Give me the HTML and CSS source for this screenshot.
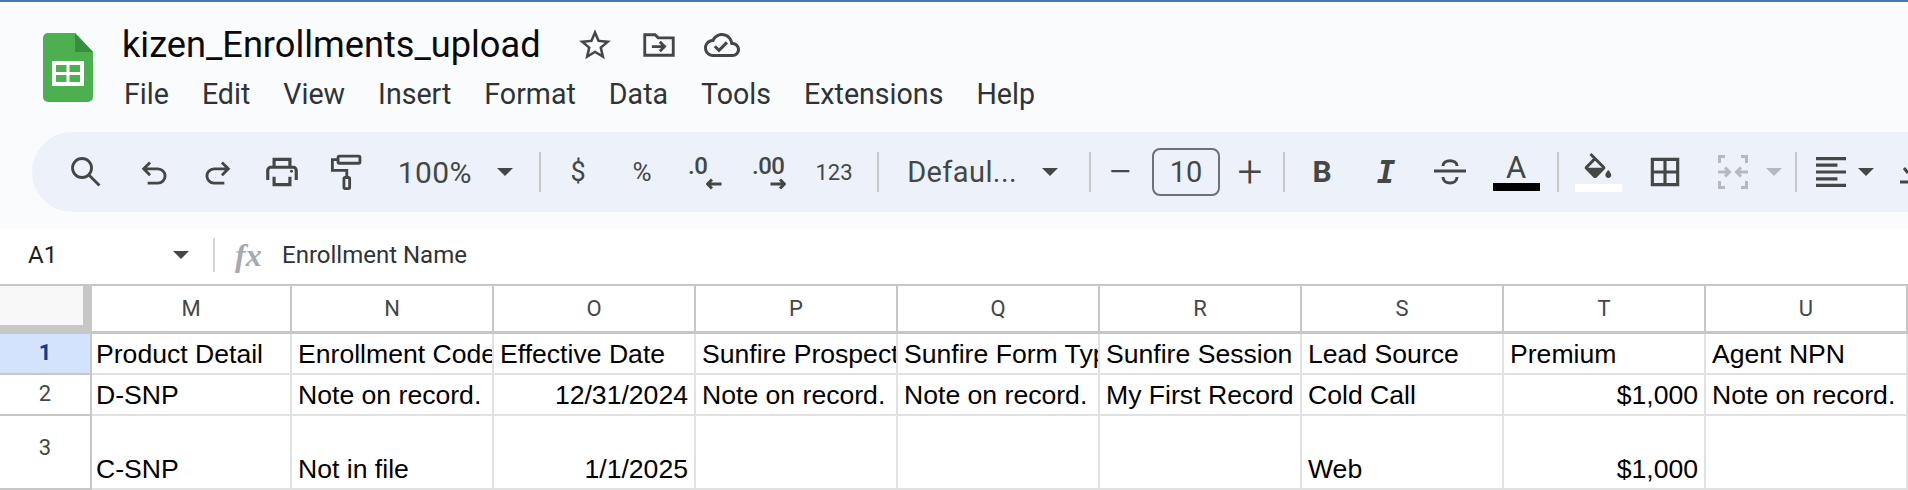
FILE: index.html
```html
<!DOCTYPE html>
<html lang="en">
<head>
<meta charset="utf-8">
<title>kizen_Enrollments_upload</title>
<link rel="stylesheet" href="styles.css">
</head>
<body>
<div class="app">
  <div class="accent"></div>
  <header class="header">
    <svg class="logo" viewBox="0 0 50 69">
      <path fill="#4caf50" d="M5 0H32L50 19V64a5 5 0 0 1-5 5H5a5 5 0 0 1-5-5V5a5 5 0 0 1 5-5z"/>
      <path fill="#388e3c" d="M32 0L50 19H32z"/>
      <path fill="#fff" d="M9 28H41V53H9z"/>
      <path fill="#4caf50" d="M13 32H23.500V39H13zM26.500 32H37V39H26.500zM13 42H23.500V49H13zM26.500 42H37V49H26.500z"/>
    </svg>
    <div class="titles">
      <div class="title-row">
        <h1 class="title">kizen_Enrollments_upload</h1>
        <svg class="head-icon" viewBox="0 0 24 24"><path d="M22 9.240l-7.190-.62L12 2 9.190 8.630 2 9.240l5.460 4.730L5.820 21 12 17.270 18.180 21l-1.630-7.030L22 9.240zM12 15.400l-3.760 2.270 1-4.280-3.320-2.880 4.380-.38L12 6.100l1.710 4.040 4.380.38-3.320 2.880 1 4.280L12 15.400z"/></svg>
        <svg class="head-icon" viewBox="0 0 24 24"><path class="line" d="M3 18.500V5.500H9.500L11.500 7.500H21V18.500z"/><path class="line" d="M7.500 13H15M12.500 10L15.500 13L12.500 16"/></svg>
        <svg class="head-icon cloud" viewBox="0 0 24 24"><path d="M19.350 10.040C18.670 6.590 15.640 4 12 4 9.110 4 6.600 5.640 5.350 8.040 2.340 8.360 0 10.910 0 14c0 3.310 2.690 6 6 6h13c2.760 0 5-2.240 5-5 0-2.640-2.050-4.780-4.650-4.960zM19 18H6c-2.210 0-4-1.790-4-4 0-2.050 1.530-3.760 3.560-3.970l1.070-.11.5-.95C8.080 7.140 9.940 6 12 6c2.620 0 4.880 1.860 5.390 4.430l.3 1.500 1.530.11c1.560.1 2.780 1.410 2.780 2.960 0 1.650-1.350 3-3 3zm-9-3.820l-2.090-2.090L6.500 13.500 10 17l6.010-6.010-1.410-1.410z"/></svg>
      </div>
      <nav class="menu">
        <span>File</span><span>Edit</span><span>View</span><span>Insert</span><span>Format</span><span>Data</span><span>Tools</span><span>Extensions</span><span>Help</span>
      </nav>
    </div>
  </header>

  <div class="toolbar-wrap">
  <div class="toolbar">
    <div class="tool tool-search"><svg class="ico" viewBox="0 0 24 24"><circle class="line" cx="9.500" cy="9.500" r="6"/><path class="line" d="M14 14L20.500 20.500"/></svg></div>
    <div class="tool"><svg class="ico" viewBox="0 0 24 24"><path class="line" d="M9.500 6L5.500 10L9.500 14M5.500 10H14.500A4.500 4.500 0 0 1 14.500 19H8"/></svg></div>
    <div class="tool"><svg class="ico" viewBox="0 0 24 24"><path class="line" d="M14.500 6L18.500 10L14.500 14M18.500 10H9.500A4.500 4.500 0 0 0 9.500 19H16"/></svg></div>
    <div class="tool"><svg class="ico" viewBox="0 0 24 24"><path d="M19 8h-1V3H6v5H5c-1.660 0-3 1.340-3 3v6h4v4h12v-4h4v-6c0-1.660-1.340-3-3-3zM8 5h8v3H8V5zm8 14H8v-4h8v4zm2-2v-2H6v2H4v-6c0-.55.45-1 1-1h14c.55 0 1 .45 1 1v6h-2z"/><circle cx="18" cy="11.500" r=".9"/></svg></div>
    <div class="tool"><svg class="ico" viewBox="0 0 24 24"><rect class="line" x="7" y="2" width="13.800" height="4.500" rx=".8"/><path class="line" d="M7 4.200H3.400V11H12.500V15.500"/><rect class="line" x="10.700" y="15.500" width="3.600" height="7" rx=".8"/></svg></div>
    <div class="tool tool-zoom"><span class="tool-text tool-text-zoom">100%</span><span class="caret"></span></div>
    <span class="sep sep-zoom"></span>
    <div class="tool"><span class="sym">$</span></div>
    <div class="tool"><span class="sym sym-pct">%</span></div>
    <div class="tool"><div class="dec"><span class="dec-text">.0</span><svg class="dec-arrow" viewBox="0 0 16 12"><path class="line-bold" d="M15.500 6H1.500M6 1.500L1.500 6L6 10.500"/></svg></div></div>
    <div class="tool"><div class="dec"><span class="dec-text">.00</span><svg class="dec-arrow" viewBox="0 0 16 12"><path class="line-bold" d="M.5 6H14.500M10 1.500L14.500 6L10 10.500"/></svg></div></div>
    <div class="tool"><span class="num">123</span></div>
    <span class="sep sep-num"></span>
    <div class="tool tool-font"><span class="tool-text">Defaul...</span><span class="caret"></span></div>
    <span class="sep sep-font"></span>
    <div class="tool tool-size"><span class="pm">−</span></div>
    <div class="size-box">10</div>
    <div class="tool tool-size"><span class="pm">+</span></div>
    <span class="sep sep-size"></span>
    <div class="tool tool-fmt"><span class="fmt-b">B</span></div>
    <div class="tool tool-fmt"><span class="fmt-i">I</span></div>
    <div class="tool tool-fmt"><svg class="ico-s" viewBox="0 0 34 32"><path class="line-bold" d="M1 15H33M10 10C10 3 24 3 24 10M10 21C10 29 24 29 24 21"/></svg></div>
    <div class="tool tool-a"><span class="fmt-a">A</span><span class="bar"></span></div>
    <span class="sep sep-fmt"></span>
    <div class="tool tool-fill"><svg class="ico-fill" viewBox="0 0 24 19"><path d="M16.560 8.940L7.620 0 6.210 1.410l2.380 2.380-5.150 5.150c-.59.59-.59 1.540 0 2.120l5.500 5.500c.29.29.68.44 1.060.44s.77-.15 1.060-.44l5.500-5.500c.59-.58.59-1.530 0-2.120zM5.210 10L10 5.210 14.790 10H5.210zM19 11.500s-2 2.170-2 3.500c0 1.100.9 2 2 2s2-.9 2-2c0-1.330-2-3.500-2-3.500z"/></svg><span class="bar bar-white"></span></div>
    <div class="tool tool-grid"><svg class="ico" viewBox="0 0 24 24"><path d="M3 3v18h18V3H3zm8 16H5v-6h6v6zm0-8H5V5h6v6zm8 8h-6v-6h6v6zm0-8h-6V5h6v6z"/></svg></div>
    <div class="tool tool-merge"><svg class="ico-merge" viewBox="0 0 30 34"><path class="line-dim" d="M7 1.500H1.500V8M23 1.500H28.500V8M7 32.500H1.500V26M23 32.500H28.500V26M0 17H11M7 12.500L11.500 17L7 21.500M30 17H19M23 12.500L18.500 17L23 21.500"/></svg><span class="caret caret-dim"></span></div>
    <span class="sep sep-merge"></span>
    <div class="tool tool-align"><svg class="ico-align" viewBox="0 0 28 28"><path class="line-bold" d="M0 1.500H28M0 7.500H20M0 14H28M0 20.500H20M0 26.500H28"/></svg><span class="caret"></span></div>
    <div class="tool-cut"><svg class="ico-cut" viewBox="0 0 12 24"><path class="line-bold" d="M0 22H12M4 8L8 13"/></svg></div>
  </div>
  </div>

  <div class="formula">
    <div class="namebox"><span>A1</span><span class="caret"></span></div>
    <span class="fsep"></span>
    <span class="fx">fx</span>
    <span class="ftext">Enrollment Name</span>
  </div>

  <div class="sheet">
    <div class="corner"></div>
    <div class="ch">M</div><div class="ch">N</div><div class="ch">O</div><div class="ch">P</div><div class="ch">Q</div><div class="ch">R</div><div class="ch">S</div><div class="ch">T</div><div class="ch">U</div>

    <div class="rh rh-active">1</div>
    <div class="c">Product Detail</div><div class="c">Enrollment Code</div><div class="c">Effective Date</div><div class="c">Sunfire Prospect</div><div class="c">Sunfire Form Type</div><div class="c">Sunfire Session</div><div class="c">Lead Source</div><div class="c">Premium</div><div class="c">Agent NPN</div>

    <div class="rh">2</div>
    <div class="c">D-SNP</div><div class="c">Note on record.</div><div class="c r">12/31/2024</div><div class="c">Note on record.</div><div class="c">Note on record.</div><div class="c">My First Record</div><div class="c">Cold Call</div><div class="c r">$1,000</div><div class="c">Note on record.</div>

    <div class="rh rh-tall">3</div>
    <div class="c">C-SNP</div><div class="c">Not in file</div><div class="c r">1/1/2025</div><div class="c"></div><div class="c"></div><div class="c"></div><div class="c">Web</div><div class="c r">$1,000</div><div class="c"></div>
  </div>
</div>
</body>
</html>
```
FILE: styles.css
```css
* { box-sizing: border-box; }
html, body { margin: 0; padding: 0; height: 100%; overflow: hidden; background: #fff; }
.app { width: 1908px; height: 490px; overflow: hidden; background: #fff; font-family: Roboto, "Liberation Sans", sans-serif; }
.accent { height: 2px; background: #4a77b4; }

.header { display: flex; height: 130px; padding: 31px 0 0 43px; gap: 29px; background: #f9fbfd; }
.logo { width: 50px; height: 69px; flex: none; }
.titles { display: flex; flex-direction: column; margin-top: -7px; }
.title-row { display: flex; align-items: center; height: 38px; }
.title { margin: 0 35px 0 0; font: 400 36.2px/38px Roboto, sans-serif; color: #0a0a0a; white-space: nowrap; }
.head-icon { flex: none; width: 38px; height: 38px; margin-right: 26px; fill: #444746; }
.head-icon.cloud { width: 36px; height: 36px; }
.head-icon .line { fill: none; stroke: #444746; stroke-width: 1.8; }
.menu { display: flex; gap: 33px; margin-top: 14px; margin-left: 2px; font-size: 28.6px; line-height: 32px; color: #303336; }

.toolbar-wrap { height: 97px; background: #f9fbfd; padding-left: 32px; }
.toolbar { display: flex; align-items: center; width: 1876px; height: 80px; padding-left: 22px; border-radius: 40px 0 0 40px; background: #edf2fa; overflow: hidden; color: #444746; }
.tool { display: flex; flex: none; align-items: center; justify-content: center; width: 64px; height: 60px; }
.tool-search { margin-right: 4px; }
.ico { width: 38px; height: 38px; fill: #444746; }
.line { fill: none; stroke: #444746; stroke-width: 1.8; }
.line-bold { fill: none; stroke: #444746; stroke-width: 3; }
.line-dim { fill: none; stroke: #b5b8bd; stroke-width: 3; }
.tool-text { font-size: 29px; letter-spacing: .4px; color: #444746; }
.tool-text-zoom { font-size: 30px; }
.caret { flex: none; width: 0; height: 0; border-left: 8px solid transparent; border-right: 8px solid transparent; border-top: 8px solid #444746; }
.caret-dim { border-top-color: #b5b8bd; }
.tool-zoom { width: 135px; justify-content: flex-end; gap: 25px; }
.sep { flex: none; width: 2px; height: 40px; background: #c4c7c5; }
.sep-zoom { margin: 0 5px 0 26px; }
.sep-num { margin-left: 11px; }
.sep-font { margin: 0 1px 0 31px; }
.sep-size { margin: 0 5px 0 5px; }
.sep-fmt { margin-left: 7px; }
.sep-merge { margin-left: 11px; }
.sym { font-size: 27px; }
.sym-pct { font-size: 26px; }
.dec { width: 36px; height: 40px; }
.dec-text { display: block; font-size: 24px; font-weight: 500; line-height: 28px; letter-spacing: -.5px; }
.dec-arrow { display: block; width: 16px; height: 12px; margin: -2px 0 0 18px; }
.num { font-size: 22px; }
.tool-font { width: 179px; justify-content: flex-end; gap: 25px; }
.tool-size { width: 56px; }
.pm { font-size: 44px; line-height: 40px; font-weight: 300; }
.size-box { flex: none; display: flex; align-items: center; justify-content: center; width: 68px; height: 48px; margin: 0 2px 0 4px; border: 2px solid #6f7275; border-radius: 8px; font-size: 29px; }
.fmt-b { font: 700 30px/1 Roboto, sans-serif; }
.fmt-i { font: italic 700 31px/1 "DejaVu Sans Mono", monospace; }
.ico-s { width: 34px; height: 32px; }
.tool-a { flex-direction: column; gap: 1px; width: 68px; }
.fmt-a { font: 400 31px/28px Roboto, sans-serif; }
.bar { display: block; width: 47px; height: 8px; background: #000; }
.bar-white { background: #fff; }
.tool-fill { flex-direction: column; gap: 3px; width: 78px; }
.ico-fill { width: 36px; height: 28px; fill: #444746; }
.tool-grid { width: 56px; }
.tool-merge { width: 91px; justify-content: flex-start; gap: 18px; padding-left: 25px; }
.ico-merge { flex: none; width: 30px; height: 34px; }
.tool-align { width: 77px; justify-content: flex-end; gap: 12px; }
.ico-align { flex: none; width: 30px; height: 30px; }
.tool-cut { flex: none; margin-left: 26px; }
.ico-cut { display: block; width: 12px; height: 24px; }

.formula { display: flex; align-items: center; height: 55px; padding-bottom: 3px; background: #fff; }
.namebox { display: flex; flex: none; align-items: center; justify-content: space-between; width: 161px; margin-left: 28px; font-size: 24px; color: #1f1f1f; }
.fsep { flex: none; width: 2px; height: 34px; margin: 0 20px 0 24px; background: #d3d5d6; }
.fx { flex: none; width: 47px; font: italic 700 32px/1 "Liberation Serif", serif; color: #a6aaae; }
.ftext { font-size: 24px; color: #303336; }

.sheet { display: grid; grid-template-columns: 92px 200px repeat(8, 202px); grid-template-rows: 48px 41px 41px 74px; border-top: 2px solid #c7c7c7; font-family: "Liberation Sans", Arial, sans-serif; }
.corner { background: #f8f8f8; border-right: 9px solid #c7c7c7; border-bottom: 9px solid #c7c7c7; }
.ch { display: flex; align-items: center; justify-content: center; border-right: 2px solid #c7c7c7; border-bottom: 3px solid #c7c7c7; font: 400 22px Roboto, sans-serif; color: #444746; }
.rh { display: flex; align-items: center; justify-content: center; padding-bottom: 2px; border-right: 2px solid #c7c7c7; border-bottom: 2px solid #c7c7c7; font: 400 22px Roboto, sans-serif; color: #444746; }
.rh-active { background: #d3e3fd; color: #0b3d91; font-weight: 700; }
.rh-tall { padding-bottom: 10px; }
.c { display: flex; align-items: flex-end; padding: 0 4px 4px 6px; overflow: hidden; border-right: 2px solid #e1e1e1; border-bottom: 2px solid #e1e1e1; font-size: 26.6px; line-height: 30px; white-space: nowrap; color: #000; }
.c:nth-child(10n+2) { padding-left: 4px; }
.r { justify-content: flex-end; padding-right: 6px; }
```
